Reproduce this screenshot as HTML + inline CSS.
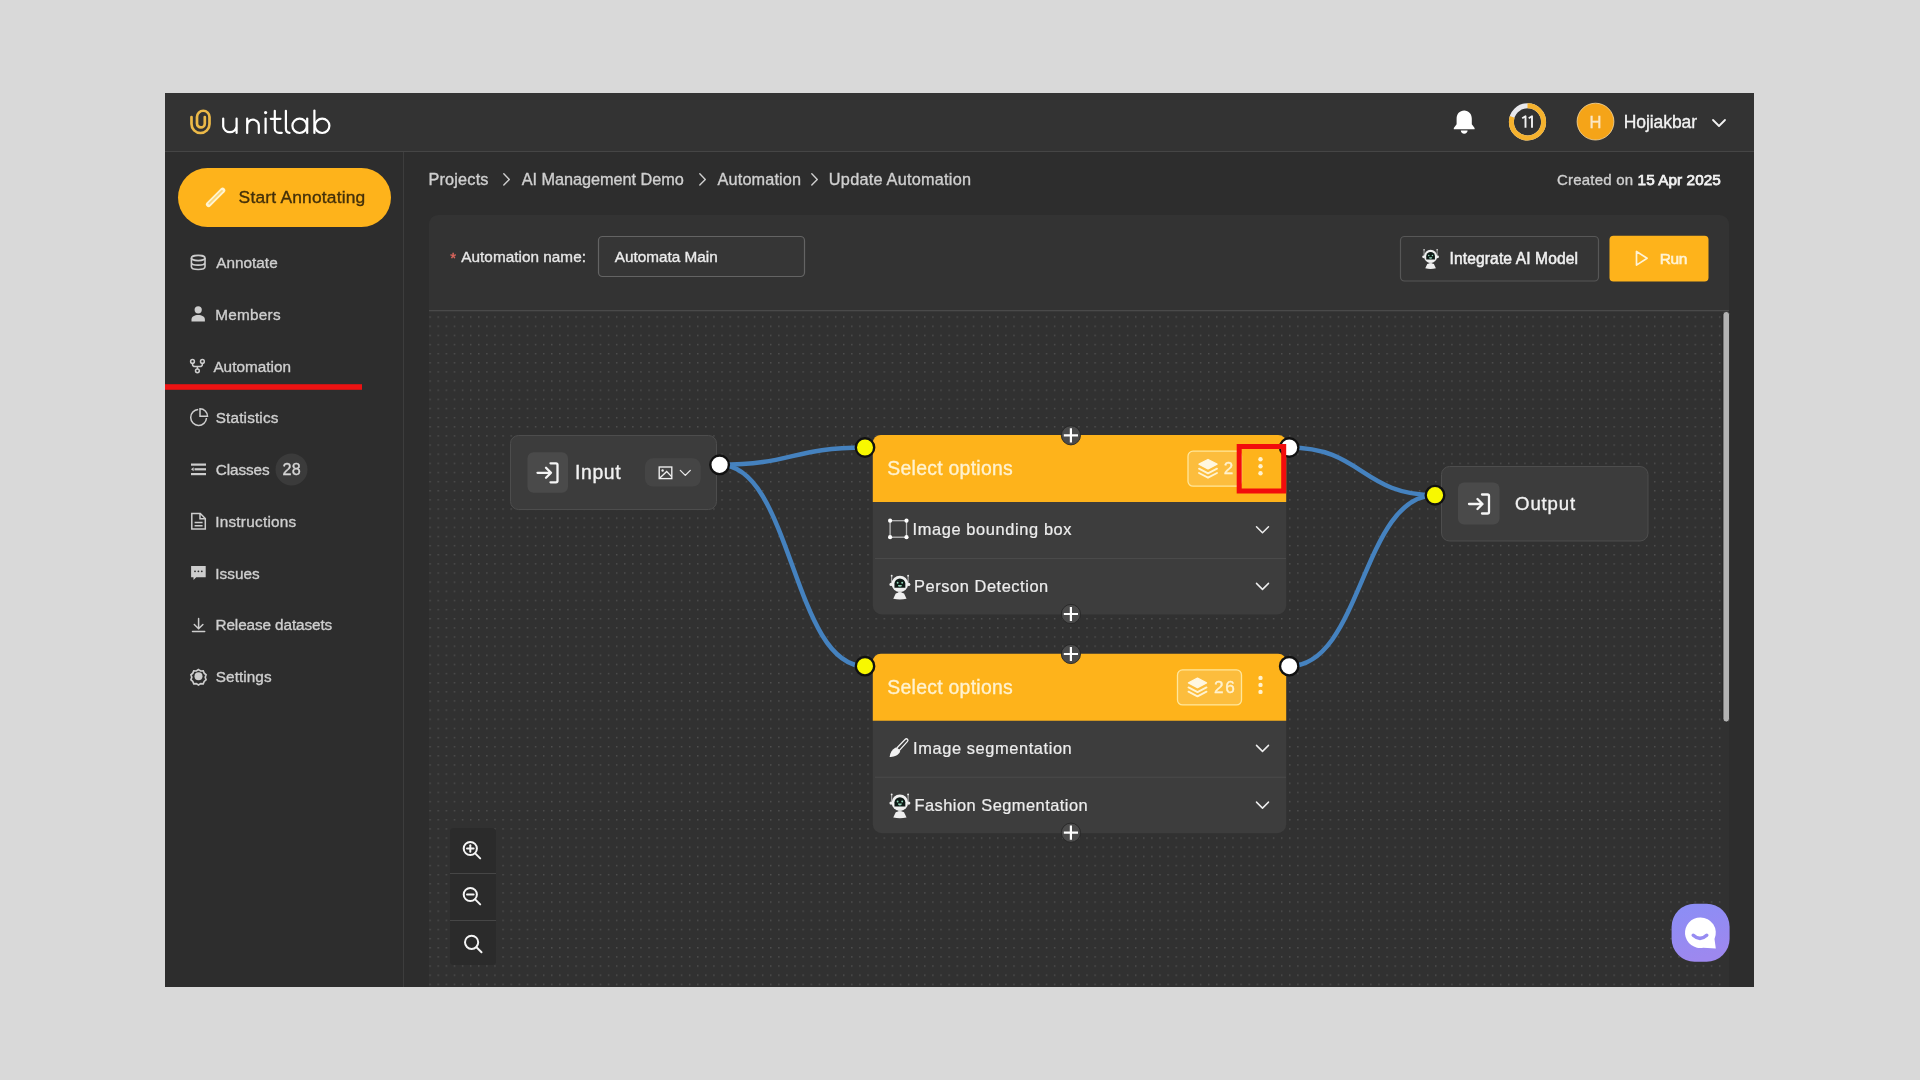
<!DOCTYPE html>
<html><head><meta charset="utf-8"><title>Update Automation</title>
<style>
html,body{margin:0;padding:0;width:1920px;height:1080px;overflow:hidden;background:#d9d9d9}
svg{display:block;font-family:'Liberation Sans', sans-serif;will-change:transform}
</style></head>
<body>
<svg width="1920" height="1080" viewBox="0 0 1920 1080">
<rect x="0" y="0" width="1920" height="1080" rx="0" fill="#d9d9d9" />
<defs><clipPath id="app"><rect x="165" y="93" width="1589" height="894"/></clipPath><pattern id="dots" x="429.4" y="316.4" width="8.11" height="9.14" patternUnits="userSpaceOnUse"><rect x="0" y="0" width="1.4" height="1.4" fill="#505050"/></pattern><linearGradient id="chatg" x1="0" y1="0" x2="0.3" y2="1"><stop offset="0" stop-color="#8a8ef6"/><stop offset="1" stop-color="#9d88ef"/></linearGradient></defs>
<g clip-path="url(#app)">
<rect x="165" y="93" width="1589" height="894" rx="0" fill="#2d2d2d" />
<rect x="165" y="93" width="1589" height="58" rx="0" fill="#333333" />
<rect x="165" y="151" width="1589" height="1" rx="0" fill="#454545" />
<rect x="403" y="152" width="1" height="835" rx="0" fill="#3d3d3d" />
<g fill="none" stroke="#ecb948" stroke-width="2.7" stroke-linecap="round" stroke-linejoin="round"><path d="M191.5 117 V124 A9 9 0 0 0 209.5 124 V117 A6.25 6.25 0 0 0 197 117 V123.5 A3.9 3.9 0 0 0 204.8 123.5 V117"/></g>
<g fill="none" stroke="#ffffff" stroke-width="2.2" stroke-linecap="round" stroke-linejoin="round"><path d="M223.2 118.5 V126.5 A6.8 6.8 0 0 0 236.6 126.5 M236.6 118.5 V133"/><path d="M247.2 133 V118.5 M247.2 125.5 A5.8 5.8 0 0 1 258.8 125.5 V133"/><path d="M265.6 118.5 V133"/><path d="M274.8 110.8 V128.5 A4.3 4.3 0 0 0 279.1 132.8 H281.8 M270.8 118.8 H280.5"/><path d="M285.9 110.8 V129 A3.9 3.9 0 0 0 289.5 132.8"/><path d="M307.2 118.5 V133"/><circle cx="299.6" cy="125.8" r="7.2"/><path d="M314.4 110.5 V133"/><circle cx="322.2" cy="125.8" r="7.2"/></g>
<circle cx="265.6" cy="112.6" r="1.6" fill="#fff"/>
<path fill="#ffffff" d="M1464.2 110.5 c-4.6 0 -7.6 3.6 -7.6 8.2 v5.6 l-2.8 3.6 v1.4 h20.8 v-1.4 l-2.8 -3.6 v-5.6 c0 -4.6 -3 -8.2 -7.6 -8.2 z M1460.8 130.6 h6.8 c0 1.9 -1.5 3.1 -3.4 3.1 s-3.4 -1.2 -3.4 -3.1 z"/>
<circle cx="1527.5" cy="121.9" r="16.1" fill="none" stroke="#e8e8ec" stroke-width="5"/>
<circle cx="1527.5" cy="121.9" r="16.1" fill="none" stroke="#f5b22e" stroke-width="5" stroke-dasharray="80.5 200" transform="rotate(-90 1527.5 121.9)"/>
<path d="M1522.2 118.3 L1525.5 116.3 V127.8 M1528.7 118.3 L1532 116.3 V127.8" fill="none" stroke="#f2f2f2" stroke-width="1.9" stroke-linejoin="round"/>
<circle cx="1595.5" cy="121.6" r="18.4" fill="#f5a418" stroke="#f8d9a0" stroke-width="0.8"/>
<text x="1595.5" y="127.6" font-size="16.5" fill="#fbe7c4" font-weight="400" text-anchor="middle" stroke="#fbe7c4" stroke-width="0.35">H</text>
<text x="1623.64" y="127.7" font-size="17.5" fill="#f2f2f2" font-weight="400" textLength="73.48" lengthAdjust="spacing" stroke="#f2f2f2" stroke-width="0.35">Hojiakbar</text>
<path d="M1713 120 l6 6 l6 -6" fill="none" stroke="#f2f2f2" stroke-width="1.8" stroke-linecap="round" stroke-linejoin="round"/>
<rect x="178" y="168" width="213" height="59" rx="29.5" fill="#feb31b" />
<path d="M208.6 204.3 L222.6 190.3" stroke="#fff4d2" stroke-width="5.4" stroke-linecap="round"/><path d="M209.2 203.7 L222 190.9" stroke="#f9d77c" stroke-width="1.8" stroke-linecap="round"/>
<text x="238.62" y="203.3" font-size="17.4" fill="#43300a" font-weight="400" textLength="126.63" lengthAdjust="spacing" stroke="#43300a" stroke-width="0.35">Start Annotating</text>
<text x="216.21" y="268.0" font-size="15.3" fill="#cfcfcf" font-weight="400" textLength="61.45" lengthAdjust="spacing" stroke="#cfcfcf" stroke-width="0.35">Annotate</text>
<text x="215.14" y="319.75" font-size="15.3" fill="#cfcfcf" font-weight="400" textLength="65.45" lengthAdjust="spacing" stroke="#cfcfcf" stroke-width="0.35">Members</text>
<text x="213.39" y="371.5" font-size="15.3" fill="#cfcfcf" font-weight="400" textLength="77.72" lengthAdjust="spacing" stroke="#cfcfcf" stroke-width="0.35">Automation</text>
<text x="215.75" y="423.25" font-size="15.3" fill="#cfcfcf" font-weight="400" textLength="62.62" lengthAdjust="spacing" stroke="#cfcfcf" stroke-width="0.35">Statistics</text>
<text x="215.65" y="475.0" font-size="15.3" fill="#cfcfcf" font-weight="400" textLength="53.96" lengthAdjust="spacing" stroke="#cfcfcf" stroke-width="0.35">Classes</text>
<text x="215.19" y="526.75" font-size="15.3" fill="#cfcfcf" font-weight="400" textLength="81.04" lengthAdjust="spacing" stroke="#cfcfcf" stroke-width="0.35">Instructions</text>
<text x="215.26" y="578.5" font-size="15.3" fill="#cfcfcf" font-weight="400" textLength="44.35" lengthAdjust="spacing" stroke="#cfcfcf" stroke-width="0.35">Issues</text>
<text x="215.48" y="630.25" font-size="15.3" fill="#cfcfcf" font-weight="400" textLength="116.72" lengthAdjust="spacing" stroke="#cfcfcf" stroke-width="0.35">Release datasets</text>
<text x="215.76" y="682.0" font-size="15.3" fill="#cfcfcf" font-weight="400" textLength="55.83" lengthAdjust="spacing" stroke="#cfcfcf" stroke-width="0.35">Settings</text>
<rect x="165" y="384.2" width="197" height="5.6" rx="0" fill="#ec1212" />
<circle cx="291.5" cy="469.4" r="16" fill="#3b3b3b"/>
<text x="282.38" y="475" font-size="16.2" fill="#d6d6d6" font-weight="400" textLength="18.38" lengthAdjust="spacing" stroke="#d6d6d6" stroke-width="0.35">28</text>
<g fill="none" stroke="#cdcdcd" stroke-width="1.6"><ellipse cx="198.2" cy="258" rx="6.8" ry="2.6"/><path d="M191.4 258 v8.8 c0 1.5 3 2.7 6.8 2.7 s6.8 -1.2 6.8 -2.7 v-8.8 M191.4 262.4 c0 1.5 3 2.7 6.8 2.7 s6.8 -1.2 6.8 -2.7"/></g>
<g fill="#cdcdcd"><circle cx="198.2" cy="309.8" r="3.6"/><path d="M191.5 321.5 v-2 c0 -3 3 -4.6 6.7 -4.6 s6.7 1.6 6.7 4.6 v2 z"/></g>
<g fill="none" stroke="#cdcdcd" stroke-width="1.5"><circle cx="192.5" cy="361.4" r="1.9"/><circle cx="202.4" cy="361.4" r="1.9"/><circle cx="197.4" cy="370.8" r="1.9"/><path d="M192.5 363.3 v0.9 c0 1.6 1.3 2.4 2.6 2.4 h4.7 c1.3 0 2.6 -0.8 2.6 -2.4 v-0.9 M197.4 366.6 v2.3"/></g>
<g fill="none" stroke="#cdcdcd" stroke-width="1.5"><path d="M198.2 409.6 A7.9 7.9 0 1 0 206.5 418"/><path d="M200 408.8 V416.3 H207.5 A7.5 7.5 0 0 0 200 408.8 z"/></g>
<g fill="#cdcdcd"><rect x="191" y="463.5" width="15" height="2.2"/><rect x="194.5" y="468.2" width="11.5" height="2.2"/><rect x="191" y="473" width="15" height="2.2"/><path d="M191 469.3 l2.6 -2 v4 z"/></g>
<g fill="none" stroke="#cdcdcd" stroke-width="1.5"><path d="M191.8 513.5 h8.5 l5 5 v10.5 h-13.5 z M200 513.5 v5.2 h5.2"/><path d="M194.6 522.5 h8 M194.6 525.7 h8"/></g>
<path fill="#cdcdcd" d="M191.1 566 h14.6 v11.2 h-9.5 l-2.7 2.7 v-2.7 h-2.4 z"/>
<g fill="#2d2d2d"><circle cx="195" cy="571.3" r="0.9"/><circle cx="198.4" cy="571.3" r="0.9"/><circle cx="201.8" cy="571.3" r="0.9"/></g>
<g fill="none" stroke="#cdcdcd" stroke-width="1.5" stroke-linecap="round"><path d="M198.6 618.5 v10 M194.3 624.5 l4.3 4.2 l4.3 -4.2"/><path d="M192.5 631.5 h12.2"/></g>
<g transform="translate(198.5 676.3) scale(0.84) translate(-198.5 -676.3)" fill="none" stroke="#cdcdcd" stroke-width="2"><path d="M198.5 668.3 l2.6 1.7 l3 -0.2 l1.2 2.8 l2.2 2 l-1 2.9 l1 2.9 l-2.2 2 l-1.2 2.8 l-3 -0.2 l-2.6 1.7 l-2.6 -1.7 l-3 0.2 l-1.2 -2.8 l-2.2 -2 l1 -2.9 l-1 -2.9 l2.2 -2 l1.2 -2.8 l3 0.2 z"/></g>
<circle cx="198.5" cy="676.3" r="4" fill="#cdcdcd"/>
<text x="428.42" y="185.4" font-size="16.3" fill="#cfcfcf" font-weight="400" textLength="60.05" lengthAdjust="spacing" stroke="#cfcfcf" stroke-width="0.35">Projects</text>
<text x="521.8" y="185.4" font-size="16.3" fill="#cfcfcf" font-weight="400" textLength="161.96" lengthAdjust="spacing" stroke="#cfcfcf" stroke-width="0.35">AI Management Demo</text>
<text x="717.58" y="185.4" font-size="16.3" fill="#cfcfcf" font-weight="400" textLength="83.43" lengthAdjust="spacing" stroke="#cfcfcf" stroke-width="0.35">Automation</text>
<text x="828.86" y="185.4" font-size="16.3" fill="#cfcfcf" font-weight="400" textLength="142.15" lengthAdjust="spacing" stroke="#cfcfcf" stroke-width="0.35">Update Automation</text>
<path d="M503.8 173.8 l5.5 5.6 l-5.5 5.6" fill="none" stroke="#cfcfcf" stroke-width="1.4" stroke-linecap="round" stroke-linejoin="round"/>
<path d="M699.8 173.8 l5.5 5.6 l-5.5 5.6" fill="none" stroke="#cfcfcf" stroke-width="1.4" stroke-linecap="round" stroke-linejoin="round"/>
<path d="M811.8 173.8 l5.5 5.6 l-5.5 5.6" fill="none" stroke="#cfcfcf" stroke-width="1.4" stroke-linecap="round" stroke-linejoin="round"/>
<text x="1556.88" y="184.6" font-size="15" fill="#cfcfcf" font-weight="400" textLength="76.16" lengthAdjust="spacing" stroke="#cfcfcf" stroke-width="0.35">Created on</text>
<text x="1637.61" y="184.6" font-size="15.3" fill="#f2f2f2" font-weight="400" textLength="83.21" lengthAdjust="spacing" stroke="#f2f2f2" stroke-width="0.75">15 Apr 2025</text>
<rect x="429" y="215" width="1300" height="800" rx="9" fill="#333333" />
<rect x="429" y="311" width="1300" height="676" rx="0" fill="#313131" />
<rect x="429" y="311" width="1294" height="676" rx="0" fill="url(#dots)" />
<rect x="429" y="310" width="1300" height="1.3" rx="0" fill="#4a4a4a" />
<rect x="1723" y="311.5" width="6.5" height="410.5" rx="3.2" fill="#b3b3b3" stroke="#232323" stroke-width="0.8" />
<text x="450.15" y="263" font-size="15" fill="#e4685f" font-weight="400" textLength="24.23" lengthAdjust="spacing" stroke="#e4685f" stroke-width="0.35">*</text>
<text x="461.3" y="261.9" font-size="15.3" fill="#e6e6e6" font-weight="400" textLength="124.63" lengthAdjust="spacing" stroke="#e6e6e6" stroke-width="0.35">Automation name:</text>
<rect x="598.5" y="236.5" width="206" height="40" rx="4" fill="#363636" stroke="#646464" stroke-width="1.2" />
<text x="614.84" y="261.9" font-size="15.3" fill="#ececec" font-weight="400" textLength="102.89" lengthAdjust="spacing" stroke="#ececec" stroke-width="0.35">Automata Main</text>
<rect x="1400.5" y="236.5" width="198" height="44.5" rx="4" fill="#353535" stroke="#575757" stroke-width="1.2" />
<text x="1449.57" y="264.2" font-size="15.6" fill="#f0f0f0" font-weight="400" textLength="128.44" lengthAdjust="spacing" stroke="#f0f0f0" stroke-width="0.5">Integrate AI Model</text>
<rect x="1609.5" y="235.7" width="99" height="45.7" rx="4" fill="#feb31b" />
<path d="M1636.5 251.5 v13.6 l10.6 -6.8 z" fill="none" stroke="#fff3d4" stroke-width="1.7" stroke-linejoin="round"/>
<text x="1659.67" y="264.2" font-size="15.5" fill="#fff3d4" font-weight="400" textLength="27.73" lengthAdjust="spacing" stroke="#fff3d4" stroke-width="0.6">Run</text>
<g transform="translate(1422.3 248.6) scale(0.79)"><path d="M2.2 1.6 V9 M18.8 1.6 V9" stroke="#dcdcdc" stroke-width="0.8"/><circle cx="2.2" cy="1.6" r="0.95" fill="#e8e8e8"/><circle cx="18.8" cy="1.6" r="0.95" fill="#e8e8e8"/><circle cx="1.6" cy="10.4" r="1.7" fill="#eeeeee"/><circle cx="19.4" cy="10.4" r="1.7" fill="#eeeeee"/><circle cx="10.5" cy="9.9" r="8.3" fill="#f0f0f0"/><path d="M5 13.8 V9.6 a5.5 5.2 0 0 1 11 0 V13.8 z" fill="#0e1a16"/><circle cx="8.2" cy="8.8" r="0.95" fill="#8fd1b5"/><circle cx="12.8" cy="8.8" r="0.95" fill="#8fd1b5"/><path d="M8.5 10.9 h4 a2 1.9 0 0 1 -4 0 z" fill="#8fd1b5"/><rect x="8.8" y="17" width="3.4" height="2.2" fill="#d8d8d8"/><path d="M3.8 25 L6.3 19.6 Q10.5 17.6 14.7 19.6 L17.2 25 Q10.5 26.4 3.8 25 z" fill="#eeeeee"/></g>
<path d="M719.6 464.8 C792.3 464.8 792.3 447.5 865 447.5" fill="none" stroke="#4582bf" stroke-width="4.5"/>
<path d="M719.6 464.8 C792.3 464.8 792.3 666.2 865 666.2" fill="none" stroke="#4582bf" stroke-width="4.5"/>
<path d="M1289 447.5 C1362.0 447.5 1362.0 495.2 1435 495.2" fill="none" stroke="#4582bf" stroke-width="4.5"/>
<path d="M1289 666.2 C1362.0 666.2 1362.0 495.2 1435 495.2" fill="none" stroke="#4582bf" stroke-width="4.5"/>
<rect x="510.5" y="435.5" width="206" height="74" rx="8" fill="#3c3c3c" stroke="#4d4d4d" stroke-width="1" />
<rect x="527.5" y="452.3" width="40.5" height="40.5" rx="6" fill="#4a4a4a" />
<g transform="translate(536.5 462.3)" fill="none" stroke="#f5f5f5" stroke-width="2.3" stroke-linecap="round" stroke-linejoin="round"><path d="M1 10.5 h13 M9.5 5.5 l5 5 l-5 5 M14 1 h5.5 a1.5 1.5 0 0 1 1.5 1.5 v16 a1.5 1.5 0 0 1 -1.5 1.5 h-5.5"/></g>
<text x="575.11" y="479.3" font-size="19.4" fill="#f2f2f2" font-weight="400" textLength="45.43" lengthAdjust="spacing" stroke="#f2f2f2" stroke-width="0.35">Input</text>
<rect x="645" y="458.3" width="55.7" height="28.3" rx="8" fill="#454545" />
<g fill="none" stroke="#f0f0f0" stroke-width="1.35"><rect x="659.2" y="467" width="12.6" height="11.6"/><path d="M659.6 478.2 L666.7 471.5 L671.6 476.6"/></g><circle cx="662.6" cy="470.5" r="1.2" fill="#f0f0f0"/>
<path d="M680.3 470.4 l5 5 l5 -5" fill="none" stroke="#e8e8e8" stroke-width="1.3" stroke-linecap="round" stroke-linejoin="round"/>
<rect x="1441.5" y="466.5" width="206.5" height="74.5" rx="8" fill="#3c3c3c" stroke="#4d4d4d" stroke-width="1" />
<rect x="1458" y="482.5" width="41.5" height="42" rx="6" fill="#4a4a4a" />
<g transform="translate(1468 493.5)" fill="none" stroke="#f5f5f5" stroke-width="2.3" stroke-linecap="round" stroke-linejoin="round"><path d="M1 10.5 h13 M9.5 5.5 l5 5 l-5 5 M14 1 h5.5 a1.5 1.5 0 0 1 1.5 1.5 v16 a1.5 1.5 0 0 1 -1.5 1.5 h-5.5"/></g>
<text x="1515.07" y="510.25" font-size="18.6" fill="#f2f2f2" font-weight="400" textLength="60.09" lengthAdjust="spacing" stroke="#f2f2f2" stroke-width="0.35">Output</text>
<rect x="872.8" y="435" width="413.4000000000001" height="179.5" rx="9" fill="#3d3d3d" />
<path d="M872.8 502 V443 a8 8 0 0 1 8 -8 H1278.2 a8 8 0 0 1 8 8 V502 z" fill="#feb31b"/>
<text x="887.29" y="475.3" font-size="19.4" fill="#fff2cf" font-weight="400" textLength="125.43" lengthAdjust="spacing" stroke="#fff2cf" stroke-width="0.35">Select options</text>
<rect x="1188.0" y="451.2" width="53.5" height="35" rx="5" fill="#fcbd3d" stroke="#ffe79c" stroke-width="1.3" />
<g transform="translate(1198.0 458.5)"><path d="M10 1 l9 4.7 l-9 4.7 l-9 -4.7 z" fill="#fff7e0" stroke="#fff7e0" stroke-width="1.4" stroke-linejoin="round"/><path d="M1 10.2 l9 4.7 l9 -4.7 M1 14.5 l9 4.7 l9 -4.7" fill="none" stroke="#fff3d0" stroke-width="1.9" stroke-linejoin="round" stroke-linecap="round"/></g>
<text x="1223.69" y="474.2" font-size="17" fill="#fff2cf" font-weight="400" textLength="27.47" lengthAdjust="spacing" stroke="#fff2cf" stroke-width="0.35">2</text>
<circle cx="1260.5" cy="459.2" r="2.2" fill="#fff2cf"/>
<circle cx="1260.5" cy="466.2" r="2.2" fill="#fff2cf"/>
<circle cx="1260.5" cy="473.2" r="2.2" fill="#fff2cf"/>
<rect x="875" y="558" width="411" height="1" rx="0" fill="#4a4a4a" />
<text x="912.47" y="535.2" font-size="16.4" fill="#ededed" font-weight="400" textLength="159.08" lengthAdjust="spacing" stroke="#ededed" stroke-width="0.22">Image bounding box</text>
<path d="M1256.5 526.7 l6 6 l6 -6" fill="none" stroke="#eeeeee" stroke-width="1.5" stroke-linecap="round" stroke-linejoin="round"/>
<g><rect x="890.1" y="520.7" width="16.4" height="16.5" fill="none" stroke="#b8b8b8" stroke-width="1.3"/><circle cx="890.1" cy="520.7" r="2.1" fill="#fff"/><circle cx="906.5" cy="520.7" r="2.1" fill="#fff"/><circle cx="890.1" cy="537.2" r="2.1" fill="#fff"/><circle cx="906.5" cy="537.2" r="2.1" fill="#fff"/></g>
<text x="914.11" y="591.9" font-size="16.4" fill="#ededed" font-weight="400" textLength="134.12" lengthAdjust="spacing" stroke="#ededed" stroke-width="0.22">Person Detection</text>
<path d="M1256.5 583.4 l6 6 l6 -6" fill="none" stroke="#eeeeee" stroke-width="1.5" stroke-linecap="round" stroke-linejoin="round"/>
<g transform="translate(889.5 574.1) scale(0.99)"><path d="M2.2 1.6 V9 M18.8 1.6 V9" stroke="#dcdcdc" stroke-width="0.8"/><circle cx="2.2" cy="1.6" r="0.95" fill="#e8e8e8"/><circle cx="18.8" cy="1.6" r="0.95" fill="#e8e8e8"/><circle cx="1.6" cy="10.4" r="1.7" fill="#eeeeee"/><circle cx="19.4" cy="10.4" r="1.7" fill="#eeeeee"/><circle cx="10.5" cy="9.9" r="8.3" fill="#f0f0f0"/><path d="M5 13.8 V9.6 a5.5 5.2 0 0 1 11 0 V13.8 z" fill="#0e1a16"/><circle cx="8.2" cy="8.8" r="0.95" fill="#8fd1b5"/><circle cx="12.8" cy="8.8" r="0.95" fill="#8fd1b5"/><path d="M8.5 10.9 h4 a2 1.9 0 0 1 -4 0 z" fill="#8fd1b5"/><rect x="8.8" y="17" width="3.4" height="2.2" fill="#d8d8d8"/><path d="M3.8 25 L6.3 19.6 Q10.5 17.6 14.7 19.6 L17.2 25 Q10.5 26.4 3.8 25 z" fill="#eeeeee"/></g>
<circle cx="1070.9" cy="435.3" r="9.6" fill="#4b4b4b" stroke="#262626" stroke-width="0.9"/>
<path d="M1063.8 435.3 h14.2 M1070.9 428.2 v14.2" stroke="#ffffff" stroke-width="2.2"/>
<circle cx="1070.9" cy="614" r="9.6" fill="#4b4b4b" stroke="#262626" stroke-width="0.9"/>
<path d="M1063.8 614 h14.2 M1070.9 606.9 v14.2" stroke="#ffffff" stroke-width="2.2"/>
<circle cx="865" cy="447.5" r="9.2" fill="#f8f800" stroke="#111" stroke-width="2.4"/>
<circle cx="1289.2" cy="447.5" r="9.2" fill="#ffffff" stroke="#111" stroke-width="2.4"/>
<rect x="872.8" y="653.7" width="413.4000000000001" height="179.5" rx="9" fill="#3d3d3d" />
<path d="M872.8 720.7 V661.7 a8 8 0 0 1 8 -8 H1278.2 a8 8 0 0 1 8 8 V720.7 z" fill="#feb31b"/>
<text x="887.29" y="694.0" font-size="19.4" fill="#fff2cf" font-weight="400" textLength="125.43" lengthAdjust="spacing" stroke="#fff2cf" stroke-width="0.35">Select options</text>
<rect x="1177.5" y="669.9000000000001" width="64" height="35" rx="5" fill="#fcbd3d" stroke="#ffe79c" stroke-width="1.3" />
<g transform="translate(1187.5 677.2)"><path d="M10 1 l9 4.7 l-9 4.7 l-9 -4.7 z" fill="#fff7e0" stroke="#fff7e0" stroke-width="1.4" stroke-linejoin="round"/><path d="M1 10.2 l9 4.7 l9 -4.7 M1 14.5 l9 4.7 l9 -4.7" fill="none" stroke="#fff3d0" stroke-width="1.9" stroke-linejoin="round" stroke-linecap="round"/></g>
<text x="1214.12" y="692.8" font-size="17.2" fill="#fff2cf" font-weight="400" textLength="20.78" lengthAdjust="spacing" stroke="#fff2cf" stroke-width="0.35">26</text>
<circle cx="1260.5" cy="677.9" r="2.2" fill="#fff2cf"/>
<circle cx="1260.5" cy="684.9" r="2.2" fill="#fff2cf"/>
<circle cx="1260.5" cy="691.9" r="2.2" fill="#fff2cf"/>
<rect x="875" y="776.7" width="411" height="1" rx="0" fill="#4a4a4a" />
<text x="913.12" y="753.9" font-size="16.4" fill="#ededed" font-weight="400" textLength="158.6" lengthAdjust="spacing" stroke="#ededed" stroke-width="0.22">Image segmentation</text>
<path d="M1256.5 745.4 l6 6 l6 -6" fill="none" stroke="#eeeeee" stroke-width="1.5" stroke-linecap="round" stroke-linejoin="round"/>
<g transform="translate(0 0.0)"><path d="M896.6 748.2 L905.3 739.3 a1.5 1.5 0 0 1 2.2 2.1 L899.2 750.6 z" fill="none" stroke="#f2f2f2" stroke-width="1.3" stroke-linejoin="round"/><path d="M895.6 747.4 L900.2 751.6 C898.6 755.3 894.2 757.2 889.6 756.9 C890 752.7 892.2 749.2 895.6 747.4 z" fill="#f2f2f2"/></g>
<text x="914.49" y="810.6" font-size="16.4" fill="#ededed" font-weight="400" textLength="173.23" lengthAdjust="spacing" stroke="#ededed" stroke-width="0.22">Fashion Segmentation</text>
<path d="M1256.5 802.1 l6 6 l6 -6" fill="none" stroke="#eeeeee" stroke-width="1.5" stroke-linecap="round" stroke-linejoin="round"/>
<g transform="translate(889.5 792.8000000000001) scale(0.99)"><path d="M2.2 1.6 V9 M18.8 1.6 V9" stroke="#dcdcdc" stroke-width="0.8"/><circle cx="2.2" cy="1.6" r="0.95" fill="#e8e8e8"/><circle cx="18.8" cy="1.6" r="0.95" fill="#e8e8e8"/><circle cx="1.6" cy="10.4" r="1.7" fill="#eeeeee"/><circle cx="19.4" cy="10.4" r="1.7" fill="#eeeeee"/><circle cx="10.5" cy="9.9" r="8.3" fill="#f0f0f0"/><path d="M5 13.8 V9.6 a5.5 5.2 0 0 1 11 0 V13.8 z" fill="#0e1a16"/><circle cx="8.2" cy="8.8" r="0.95" fill="#8fd1b5"/><circle cx="12.8" cy="8.8" r="0.95" fill="#8fd1b5"/><path d="M8.5 10.9 h4 a2 1.9 0 0 1 -4 0 z" fill="#8fd1b5"/><rect x="8.8" y="17" width="3.4" height="2.2" fill="#d8d8d8"/><path d="M3.8 25 L6.3 19.6 Q10.5 17.6 14.7 19.6 L17.2 25 Q10.5 26.4 3.8 25 z" fill="#eeeeee"/></g>
<circle cx="1070.9" cy="654.0" r="9.6" fill="#4b4b4b" stroke="#262626" stroke-width="0.9"/>
<path d="M1063.8 654.0 h14.2 M1070.9 646.9 v14.2" stroke="#ffffff" stroke-width="2.2"/>
<circle cx="1070.9" cy="832.7" r="9.6" fill="#4b4b4b" stroke="#262626" stroke-width="0.9"/>
<path d="M1063.8 832.7 h14.2 M1070.9 825.6 v14.2" stroke="#ffffff" stroke-width="2.2"/>
<circle cx="865" cy="666.2" r="9.2" fill="#f8f800" stroke="#111" stroke-width="2.4"/>
<circle cx="1289.2" cy="666.2" r="9.2" fill="#ffffff" stroke="#111" stroke-width="2.4"/>
<circle cx="719.6" cy="464.8" r="9.3" fill="#ffffff" stroke="#111" stroke-width="2.4"/>
<circle cx="1435" cy="495.2" r="9.3" fill="#f8f800" stroke="#111" stroke-width="2.4"/>
<rect x="1239.2" y="446.5" width="44.5" height="44.5" fill="none" stroke="#f20c0c" stroke-width="5"/>
<rect x="450" y="828" width="46" height="137" rx="4" fill="#2b2b2b" />
<rect x="450" y="873" width="46" height="1" rx="0" fill="#464646" />
<rect x="450" y="920" width="46" height="1" rx="0" fill="#464646" />
<g fill="none" stroke="#f5f5f5" stroke-width="2" stroke-linecap="round"><circle cx="470.3" cy="848.5" r="6.6"/><path d="M475.2 853.4 l5 5"/>
<path d="M467.0 848.5 h6.6"/>
<path d="M470.3 845.2 v6.6"/>
</g>
<g fill="none" stroke="#f5f5f5" stroke-width="2" stroke-linecap="round"><circle cx="470.3" cy="894.5" r="6.6"/><path d="M475.2 899.4 l5 5"/>
<path d="M467.0 894.5 h6.6"/>
</g>
<g fill="none" stroke="#f5f5f5" stroke-width="2" stroke-linecap="round"><circle cx="471.6" cy="942.3" r="6.6"/><path d="M476.5 947.1999999999999 l5 5"/>
</g>
<rect x="1671.6" y="903.8" width="58" height="58" rx="23" fill="url(#chatg)" />
<path d="M1700.3 917.5 a15.3 15.3 0 1 0 3 30.3 l12.5 0.7 l-1.3 -9.5 a15.3 15.3 0 0 0 -14.2 -21.5 z" fill="#ffffff"/>
<path d="M1693.3 935.3 q6.7 6.2 13.4 0" fill="none" stroke="#978cf2" stroke-width="3.6" stroke-linecap="round"/>
</g>
</svg>
</body></html>
